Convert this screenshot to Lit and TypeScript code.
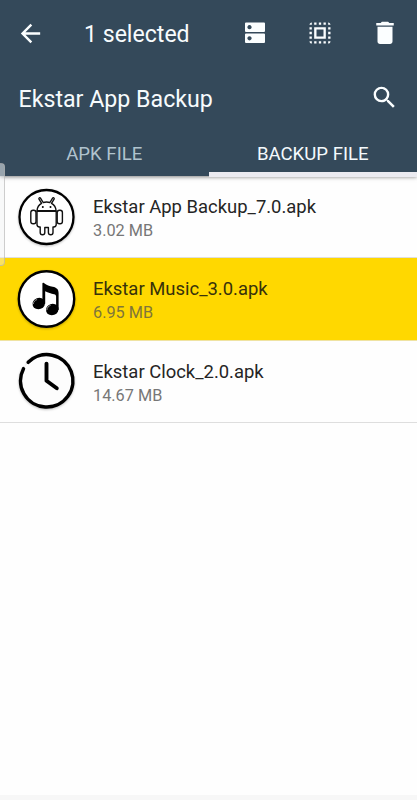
import { LitElement, html, css, svg } from "lit";
import { customElement } from "lit/decorators.js";
import { classMap } from "lit/directives/class-map.js";

const robot = svg`
  <circle cx="29" cy="29" r="27" fill="#fff" stroke="#000" stroke-width="2.3"/>
  <g fill="none" stroke="#111" stroke-width="1.4" stroke-linejoin="round" stroke-linecap="round">
    <path d="M19.500 22.700c.3-3.600 2-6.100 4.600-7.400l-2.600-4.200c-.5-1 .9-1.800 1.500-.9l2.700 4.300c2.200-.6 4.500-.6 6.700 0l2.700-4.300c.6-.9 2-.1 1.500.9l-2.600 4.200c2.600 1.300 4.300 3.800 4.600 7.400z"/>
    <path d="M19.500 23.200v13.400c0 1.500 1 2.400 2.500 2.400h.7v5.500c0 3 4.600 3 4.600 0V39.500h3.600v5c0 3 4.600 3 4.600 0V39h.7c1.500 0 2.500-.9 2.500-2.400V23.200z"/>
    <rect x="13.300" y="22.300" width="5.200" height="13.500" rx="2.300"/>
    <rect x="39.700" y="22.300" width="5.200" height="13.500" rx="2.300"/>
  </g>
  <circle cx="25.300" cy="19" r="1"/><circle cx="33" cy="19" r="1"/>`;

const music = svg`
  <circle cx="29" cy="29" r="27.700" fill="#fff" stroke="#000" stroke-width="2.400"/>
  <path d="M24.900 13.600c0-.9.700-1.200 1.500-.6 3 2.200 5.400 3 8.800 3.700 3.900.9 5.900 2.500 5.900 6.300v17h-2.500V26.500c0-1.400-.6-2-2-2.300-3-.7-6-1.300-8.900-2.900v12.400h-2.800z"/>
  <ellipse cx="21.300" cy="33.500" rx="6.400" ry="5.700" transform="rotate(-20 21.300 33.500)"/>
  <ellipse cx="34.800" cy="39.500" rx="6.400" ry="5.700" transform="rotate(-20 34.800 39.500)"/>
  <path d="M15.800 34c.3-2.300 1.600-3.800 3.800-4.500M29.400 40c.2-2.400 1.600-4 3.700-4.600" fill="none" stroke="#ccc" stroke-width=".7"/>`;

const clock = svg`
  <path d="M10.700 10.300A26.200 26.200 0 1 1 6 16.700" fill="#fdfdfd" stroke="#000" stroke-width="3.500" stroke-linecap="round"/>
  <path d="M29 11.600v17.100l10.300 7.600" fill="none" stroke="#000" stroke-width="3.900" stroke-linecap="round" stroke-linejoin="round"/>`;

const files = [
  { name: "Ekstar App Backup_7.0.apk", size: "3.02 MB", art: robot, selected: false },
  { name: "Ekstar Music_3.0.apk", size: "6.95 MB", art: music, selected: true },
  { name: "Ekstar Clock_2.0.apk", size: "14.67 MB", art: clock, selected: false },
];

@customElement("app-root")
export class AppRoot extends LitElement {
  static styles = css`
    :host {
      display: flex;
      flex-direction: column;
      position: relative;
      height: 800px;
      overflow: hidden;
      background: #fefefe;
      font-family: Roboto, sans-serif;
    }
    * { box-sizing: border-box; }
    svg { display: block; flex: none; }
    header {
      background: #34495a;
      color: #f7fbfd;
      height: 176px;
      flex: none;
      box-shadow: 0 1px 4px rgba(0, 0, 0, 0.5);
      z-index: 1;
    }
    header svg { fill: #fbfeff; }
    .actions {
      display: flex;
      align-items: center;
      height: 66px;
      padding: 0 17px 0 16px;
    }
    .count { font-size: 23.100px; margin-left: 39px; padding-top: 2px; flex: 1; white-space: nowrap; }
    .buttons { display: flex; align-items: center; gap: 37px; }
    .buttons svg:last-child { margin-left: -1px; }
    .titlebar {
      display: flex;
      align-items: center;
      justify-content: space-between;
      height: 66px;
      padding: 0 18px 0 18.500px;
    }
    .titlebar svg { margin-bottom: 3px; }
    .title { font-size: 23.200px; white-space: nowrap; }
    .tabs { display: flex; height: 44px; }
    .tab {
      flex: 1;
      text-align: center;
      font-size: 18.600px;
      line-height: 44px;
      color: #b0c3ce;
    }
    .tab.active { color: #f4fafd; border-bottom: 5px solid #ebebf1; margin-bottom: -1px; }
    .row {
      display: flex;
      align-items: center;
      gap: 17px;
      height: 82.300px;
      padding-left: 17px;
      border-bottom: 1px solid #dedede;
    }
    .row.selected { background: #ffd800; border-bottom-color: #efe3a2; }
    .art { filter: drop-shadow(0 1px 1px rgba(0, 0, 0, 0.25)); overflow: visible; }
    .text { padding-top: 4px; }
    .name { font-size: 18.450px; line-height: 24px; color: #252525; }
    .size { font-size: 16.300px; line-height: 23px; color: #777; }
    .selected .name { color: #37320b; }
    .selected .size { color: #80753a; }
    .foot { height: 5px; margin-top: auto; background: #f7f7f7; }
    .edge {
      position: absolute;
      z-index: 2;
      left: -6px;
      top: 163px;
      width: 11px;
      height: 103px;
      border: 1px solid rgba(170, 170, 170, 0.55);
      border-radius: 4px;
      background: linear-gradient(rgba(220, 225, 228, 0.6) 13px, rgba(240, 242, 243, 0.4) 13px);
    }
  `;

  render() {
    return html`
      <header>
        <div class="actions">
          <svg width="29" height="29" viewBox="0 0 24 24"><path d="M20 11H7.830l5.590-5.590L12 4l-8 8 8 8 1.410-1.410L7.830 13H20z"/></svg>
          <div class="count">1 selected</div>
          <div class="buttons">
            <svg width="28" height="28" viewBox="0 0 28 28"><path fill-rule="evenodd" d="M5 3.500h18q1 0 1 1v7.400q0 1-1 1H5q-1 0-1-1V4.500q0-1 1-1zM8.500 6.100a2.100 2.100 0 1 0 .01 0zM5 14.600h18q1 0 1 1v7.400q0 1-1 1H5q-1 0-1-1v-7.400q0-1 1-1zM8.500 17.200a2.100 2.100 0 1 0 .01 0z"/></svg>
            <svg width="28" height="28" viewBox="0 0 24 24"><path d="M3 5h2V3c-1.100 0-2 .9-2 2zm0 8h2v-2H3v2zm4 8h2v-2H7v2zM3 9h2V7H3v2zm10-6h-2v2h2V3zm6 0v2h2c0-1.100-.9-2-2-2zM5 21v-2H3c0 1.100.9 2 2 2zm-2-4h2v-2H3v2zM9 3H7v2h2V3zm2 18h2v-2h-2v2zm8-8h2v-2h-2v2zm0 8c1.100 0 2-.9 2-2h-2v2zm0-12h2V7h-2v2zm0 8h2v-2h-2v2zm-4 4h2v-2h-2v2zm0-16h2V3h-2v2zM7 17h10V7H7v10zm2-8h6v6H9V9z"/></svg>
            <svg width="30" height="30" viewBox="0 0 24 24"><path d="M6 18.800c0 1.100.9 2 2 2h8c1.100 0 2-.9 2-2V7H6v11.800zM19 4h-3.500l-1-1h-5l-1 1H5v2h14V4z"/></svg>
          </div>
        </div>
        <div class="titlebar">
          <div class="title">Ekstar App Backup</div>
          <svg width="29" height="29" viewBox="0 0 24 24"><path d="M15.500 14h-.79l-.28-.27A6.471 6.471 0 0 0 16 9.500 6.500 6.500 0 1 0 9.500 16c1.610 0 3.090-.59 4.230-1.570l.27.28v.79l5 4.990L20.490 19l-4.990-5zm-6 0C7.010 14 5 11.990 5 9.500S7.010 5 9.500 5 14 7.010 14 9.500 11.990 14 9.500 14z"/></svg>
        </div>
        <div class="tabs">
          <div class="tab">APK FILE</div>
          <div class="tab active">BACKUP FILE</div>
        </div>
      </header>
      <main>
        ${files.map(
          (f) => html`
            <div class=${classMap({ row: true, selected: f.selected })}>
              <svg class="art" width="59" height="58" viewBox="0 0 58 58">${f.art}</svg>
              <div class="text">
                <div class="name">${f.name}</div>
                <div class="size">${f.size}</div>
              </div>
            </div>
          `
        )}
      </main>
      <div class="foot"></div>
      <div class="edge"></div>
    `;
  }
}
